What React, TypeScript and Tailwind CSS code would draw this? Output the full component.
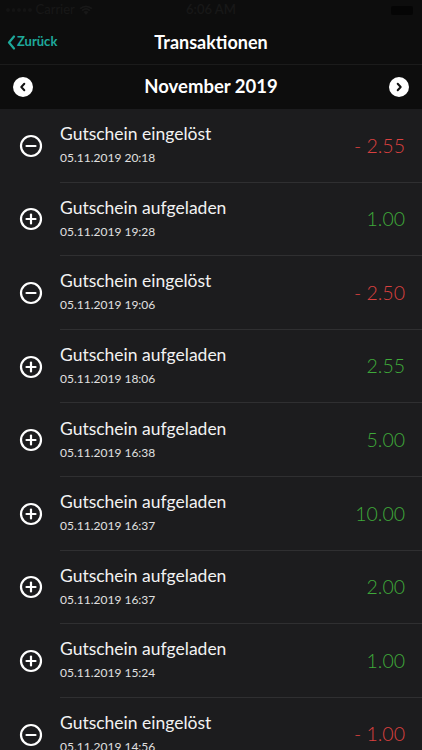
import React from "react";

type Tx = { title: string; date: string; amount: string; plus: boolean };

const txs: Tx[] = [
  { title: "Gutschein eingelöst", date: "05.11.2019 20:18", amount: "- 2.55", plus: false },
  { title: "Gutschein aufgeladen", date: "05.11.2019 19:28", amount: "1.00", plus: true },
  { title: "Gutschein eingelöst", date: "05.11.2019 19:06", amount: "- 2.50", plus: false },
  { title: "Gutschein aufgeladen", date: "05.11.2019 18:06", amount: "2.55", plus: true },
  { title: "Gutschein aufgeladen", date: "05.11.2019 16:38", amount: "5.00", plus: true },
  { title: "Gutschein aufgeladen", date: "05.11.2019 16:37", amount: "10.00", plus: true },
  { title: "Gutschein aufgeladen", date: "05.11.2019 16:37", amount: "2.00", plus: true },
  { title: "Gutschein aufgeladen", date: "05.11.2019 15:24", amount: "1.00", plus: true },
  { title: "Gutschein eingelöst", date: "05.11.2019 14:56", amount: "- 1.00", plus: false },
];

function RowIcon({ plus }: { plus: boolean }) {
  return (
    <svg width="24" height="24" viewBox="0 0 24 24" fill="none" stroke="white" strokeWidth="2.2" strokeLinecap="round">
      <circle cx="12" cy="12" r="10" />
      <line x1="7.5" y1="12" x2="16.5" y2="12" />
      {plus && <line x1="12" y1="7.5" x2="12" y2="16.5" />}
    </svg>
  );
}

function NavCircle({ dir }: { dir: "l" | "r" }) {
  return (
    <div className="w-[20px] h-[20px] rounded-full bg-white flex items-center justify-center">
      <svg width="10" height="10" viewBox="0 0 10 10" fill="none" stroke="#111" strokeWidth="2" strokeLinecap="round" strokeLinejoin="round">
        {dir === "l" ? <polyline points="6.3,1.8 3.3,5 6.3,8.2" /> : <polyline points="3.7,1.8 6.7,5 3.7,8.2" />}
      </svg>
    </div>
  );
}

export default function App() {
  return (
    <div className="w-[422px] h-[750px] overflow-hidden bg-[#1c1c1e] text-white" style={{ fontFamily: "Lato, 'Noto Sans', sans-serif" }}>
      {/* status bar */}
      <div className="h-[20px] bg-[#0d0d0d] relative flex items-center text-[#181818] text-[13px]">
        <div className="flex items-center pl-[6px] gap-[4px]">
          <div className="flex gap-[2px]">
            {[0, 1, 2, 3, 4].map((i) => (
              <div key={i} className="w-[3.5px] h-[3.5px] rounded-full bg-[#141414]" />
            ))}
          </div>
          <span>Carrier</span>
          <svg width="14" height="10" viewBox="0 0 14 10" fill="#181818">
            <path d="M7 10 L4.5 7 Q7 5 9.5 7 Z" />
            <path d="M2.5 5 Q7 1 11.5 5 L10.3 6.2 Q7 3.5 3.7 6.2 Z" />
            <path d="M0.5 3 Q7 -2 13.5 3 L12.3 4.2 Q7 0.2 1.7 4.2 Z" />
          </svg>
        </div>
        <div className="absolute left-0 right-0 text-center font-semibold">6:06 AM</div>
        <div className="ml-auto mr-[9px] w-[22px] h-[9px] bg-[#050505] rounded-[2px]" />
      </div>
      {/* nav bar */}
      <div className="h-[45px] bg-[#0d0d0d] relative flex items-center border-b border-[#1b1b1b]">
        <div className="flex items-center pl-[7px] text-[#1ea99b] text-[13px] font-bold">
          <svg width="9" height="15" viewBox="0 0 9 15" fill="none" stroke="#1ea99b" strokeWidth="2.2" strokeLinecap="round" strokeLinejoin="round">
            <polyline points="7,1.5 2,7.5 7,13.5" />
          </svg>
          <span className="ml-[1px]">Zurück</span>
        </div>
        <div className="absolute left-0 right-0 text-center text-[18px] font-bold pointer-events-none">Transaktionen</div>
      </div>
      {/* month */}
      <div className="h-[44px] bg-[#0d0d0d] flex items-center justify-between px-[13px]">
        <NavCircle dir="l" />
        <div className="text-[18.5px] font-bold">November 2019</div>
        <NavCircle dir="r" />
      </div>
      {/* list */}
      <div>
        {txs.map((t, i) => (
          <div key={i} className="h-[73.6px] flex items-stretch">
            <div className="w-[60px] flex items-center pl-[19px]">
              <RowIcon plus={t.plus} />
            </div>
            <div className="flex-1 flex items-center border-b border-[#2f2f31] pr-[17px]">
              <div className="flex-1 flex flex-col pb-[1px]">
                <div className="text-[17.5px] leading-[22px] text-[#f2f2f2]">{t.title}</div>
                <div className="text-[12px] leading-[16px] mt-[5px] text-[#e0e0e0]">{t.date}</div>
              </div>
              <div className={`text-[19.5px] font-light ${t.plus ? "text-[#3fa93a]" : "text-[#d9403f]"}`}>{t.amount}</div>
            </div>
          </div>
        ))}
      </div>
    </div>
  );
}
